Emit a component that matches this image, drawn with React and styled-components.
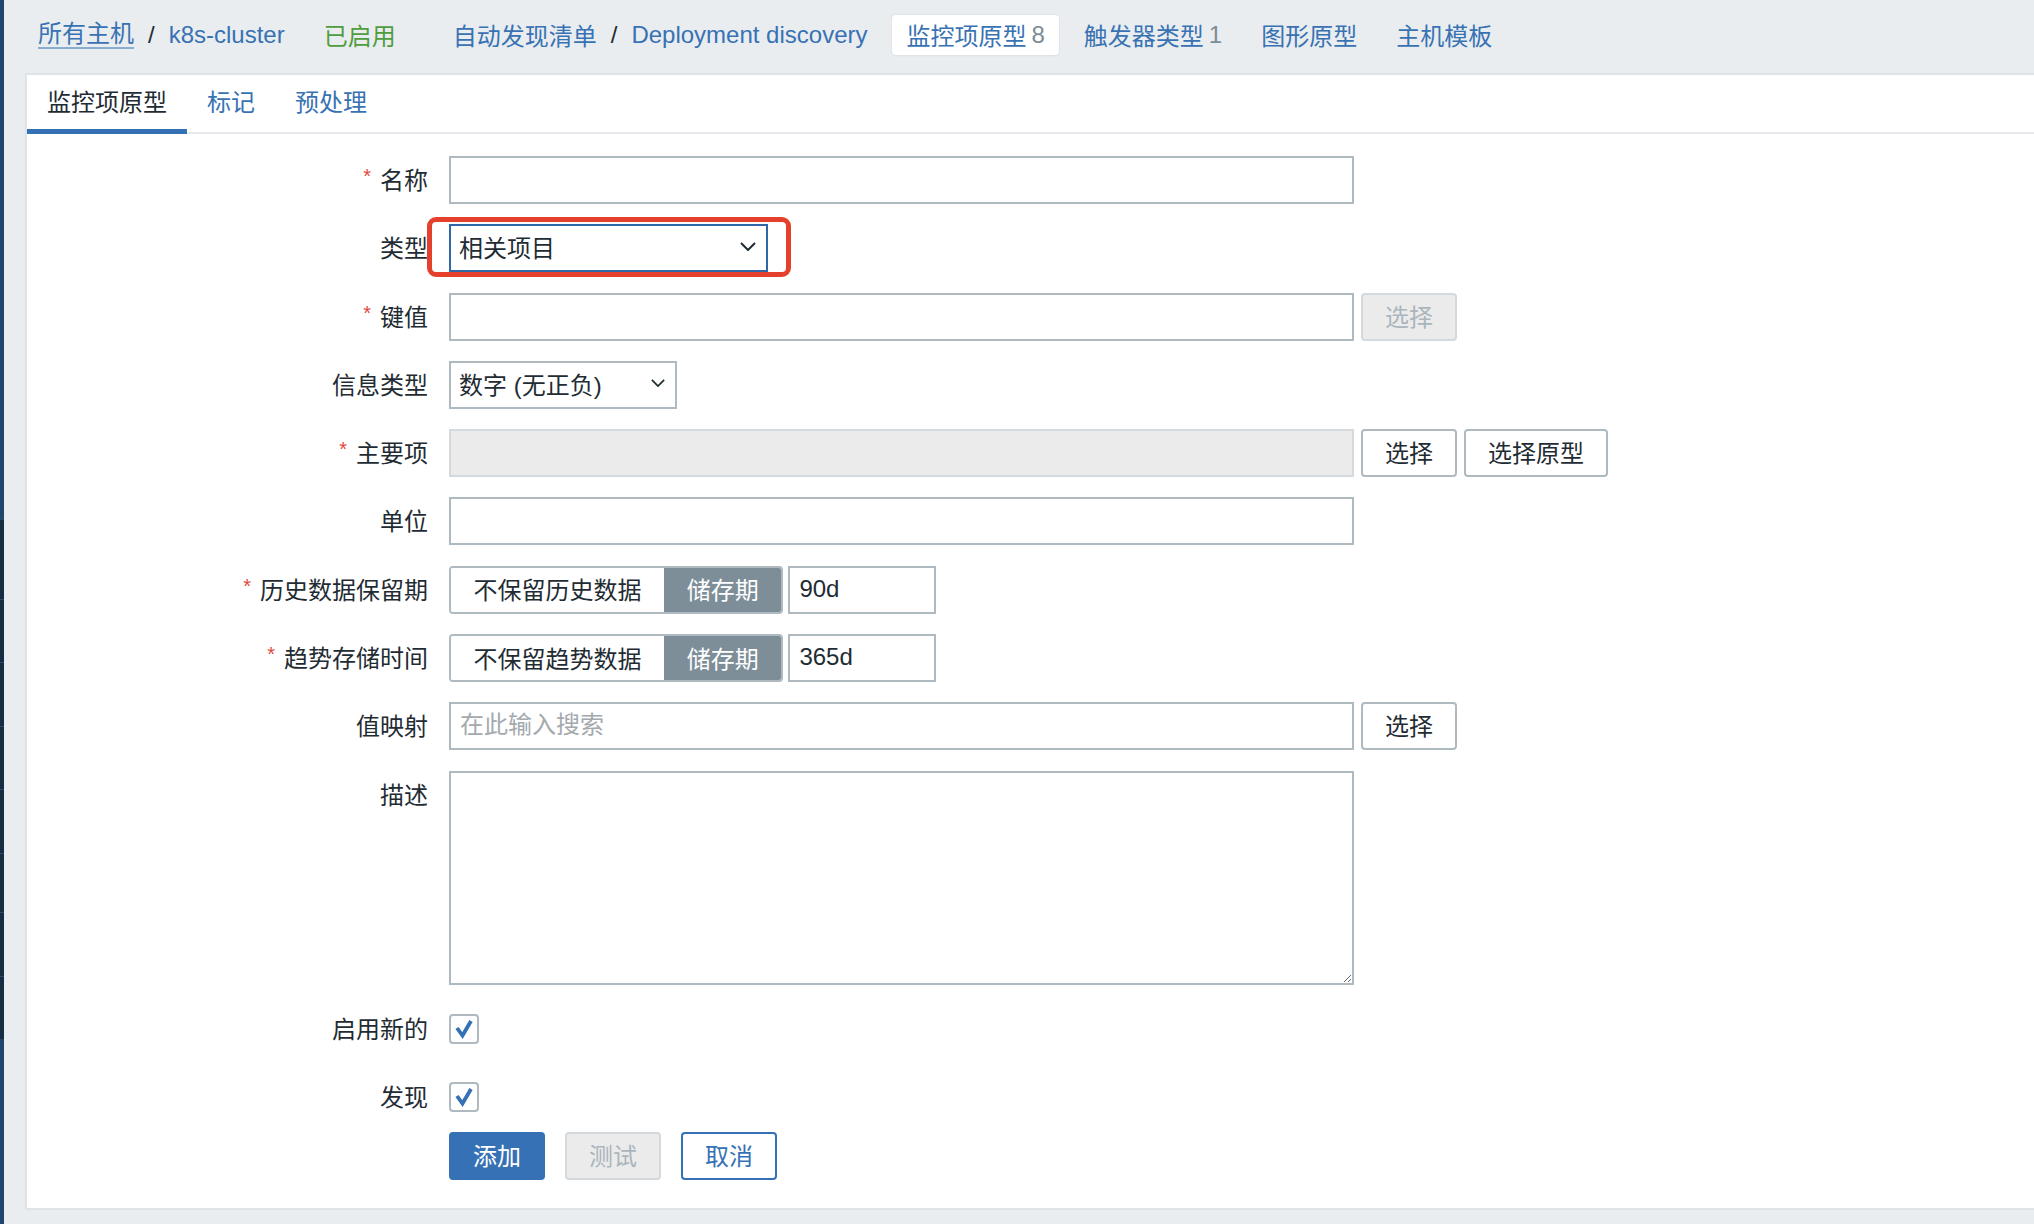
import React from 'react'
import styled, { createGlobalStyle, css } from 'styled-components'

const GlobalStyle = createGlobalStyle`
  html, body {
    margin: 0;
    padding: 0;
    background: #e9edf0;
  }
  body {
    font-family: 'Liberation Sans', 'Noto Sans CJK SC', sans-serif;
    color: #1f2c33;
  }
`

const blue = '#3872b3'
const border = '#aeb9c0'
const font = `'Liberation Sans', 'Noto Sans CJK SC', sans-serif`

const Page = styled.div`
  display: flex;
  height: 1224px;
  overflow: hidden;
`

const SideEdge = styled.div`
  width: 4px;
  display: flex;
  flex-direction: column;
  background: #1f476b;
`

const SideBlock = styled.div`
  height: ${(p) => p.$h}px;
  background: ${(p) => (p.$dark ? '#172d42' : '#1f476b')};
  border-top: ${(p) => (p.$dark ? '1px solid #2c4a64' : 'none')};
`

const Main = styled.div`
  flex: 1;
  display: flex;
  flex-direction: column;
  padding-bottom: 14px;
`

const Header = styled.div`
  height: 69px;
  padding-bottom: 4px;
  display: flex;
  align-items: center;
  padding-left: 20px;
  font-size: 24px;
`

const NavItem = styled.div`
  display: flex;
  align-items: center;
  height: 40px;
  padding: 0 14px;
  margin-right: 11px;
  margin-left: ${(p) => p.$offset || 0}px;
  border-radius: 4px;
  white-space: nowrap;
  color: ${(p) => (p.$green ? '#4f9d3e' : blue)};
  ${(p) =>
    p.$active &&
    css`
      background: #fff;
      box-shadow: 0 0 0 1px #dfe4e8, 0 1px 2px rgba(0, 0, 0, 0.06);
    `}
`

const NavLink = styled.span`
  color: ${blue};
  ${(p) =>
    p.$underline &&
    css`
      border-bottom: 2px solid #8aaed2;
      line-height: 26px;
    `}
`

const Sep = styled.span`
  margin: 0 14px;
  color: #1f2c33;
`

const Count = styled.span`
  color: #7c8b96;
  margin-left: 5px;
`

const Card = styled.div`
  flex: 1;
  margin-left: 21px;
  background: #fff;
  border-top: 2px solid #dde3e7;
  border-left: 2px solid #dde3e7;
  border-bottom: 2px solid #dde3e7;
  display: flex;
  flex-direction: column;
`

const TabBar = styled.div`
  display: flex;
  border-bottom: 2px solid #e6eaee;
`

const Tab = styled.div`
  height: 54px;
  line-height: 56px;
  padding: 0 20px;
  font-size: 24px;
  margin-bottom: -2px;
  border-bottom: 5px solid ${(p) => (p.$active ? '#3470b4' : 'transparent')};
  color: ${(p) => (p.$active ? '#1f2c33' : blue)};
`

const Form = styled.div`
  display: grid;
  grid-template-columns: 401px 1fr;
  column-gap: 21px;
  row-gap: 20.3px;
  padding-top: 22px;
`

const Label = styled.div`
  display: flex;
  justify-content: flex-end;
  align-items: center;
  box-sizing: border-box;
  height: 48px;
  padding-bottom: 3px;
  font-size: 24px;
  white-space: nowrap;
  align-self: start;
`

const Star = styled.span`
  color: #e2483d;
  font-size: 20px;
  margin-right: 9px;
  position: relative;
  top: -2px;
`

const Field = styled.div`
  display: flex;
  align-items: center;
  gap: ${(p) => p.$gap ?? 7}px;
  min-height: 48px;
`

const TextInput = styled.input`
  box-sizing: border-box;
  width: ${(p) => p.$w || 905}px;
  height: 48px;
  border: 2px solid ${border};
  padding: 0 9px 2px;
  font-family: ${font};
  font-size: 24px;
  color: #1f2c33;
  background: #fff;
  outline: none;
  &::placeholder {
    color: #a3a9ad;
  }
  &:disabled {
    background: #ebebeb;
    border-color: #d3d9dd;
  }
`

const SelectBox = styled.div`
  box-sizing: border-box;
  width: ${(p) => p.$w}px;
  height: 48px;
  display: flex;
  align-items: center;
  justify-content: space-between;
  padding: 0 10px 3px 8px;
  border: 2px solid ${(p) => (p.$focus ? '#2f68a6' : border)};
  font-size: 24px;
  background: #fff;
`

const Highlight = styled.div`
  position: relative;
  &::after {
    content: '';
    position: absolute;
    top: -7px;
    left: -22px;
    right: -23px;
    bottom: -5px;
    border: 5px solid #e4402b;
    border-radius: 9px;
    pointer-events: none;
  }
`

const Button = styled.button`
  box-sizing: border-box;
  height: 48px;
  padding: 0 22px 3px;
  font-family: ${font};
  font-size: 24px;
  border-radius: 4px;
  border: 2px solid ${border};
  background: #fff;
  color: #1f2c33;
  ${(p) =>
    p.$variant === 'disabled' &&
    css`
      background: #ebebeb;
      border-color: #d3d9dd;
      color: #aab5bc;
    `}
  ${(p) =>
    p.$variant === 'primary' &&
    css`
      background: #3671b5;
      border-color: #3671b5;
      color: #fff;
    `}
  ${(p) =>
    p.$variant === 'outline' &&
    css`
      border-color: #3671b5;
      color: #3671b5;
    `}
`

const Segmented = styled.div`
  display: flex;
  height: 48px;
  box-sizing: border-box;
  border: 2px solid ${border};
  border-radius: 4px;
  overflow: hidden;
`

const Segment = styled.div`
  display: flex;
  align-items: center;
  padding: 0 22.6px 2px;
  font-size: 24px;
  background: ${(p) => (p.$active ? '#7d8e99' : '#fff')};
  color: ${(p) => (p.$active ? '#fff' : '#1f2c33')};
`

const TextArea = styled.textarea`
  box-sizing: border-box;
  width: 905px;
  height: 214px;
  border: 2px solid ${border};
  font-family: ${font};
  font-size: 24px;
  resize: both;
  outline: none;
`

const CheckBox = styled.div`
  box-sizing: border-box;
  width: 30px;
  height: 30px;
  border: 2px solid ${border};
  border-radius: 4px;
  display: flex;
  align-items: center;
  justify-content: center;
`

const ButtonRow = styled.div`
  display: flex;
  gap: 20px;
  padding-left: 422px;
  margin-top: 11px;
`

const Chevron = ({ w = 16 }) => (
  <svg width={w} height={w / 2 + 1} viewBox="0 0 16 9" fill="none">
    <path d="M1 1 L8 8 L15 1" stroke="#1f2c33" strokeWidth="2" />
  </svg>
)

const Check = () => (
  <CheckBox>
    <svg width="22" height="22" viewBox="0 0 22 22" fill="none">
      <path d="M4 10 L9.5 17.5 L18 3" stroke="#3470b4" strokeWidth="3.8" strokeLinejoin="miter" />
    </svg>
  </CheckBox>
)

const Req = ({ children }) => (
  <Label>
    <Star>*</Star>
    {children}
  </Label>
)

const sideBlocks = [
  { h: 519 },
  { h: 79, dark: true },
  { h: 62, dark: true },
  { h: 63, dark: true },
  { h: 62, dark: true },
  { h: 63, dark: true },
  { h: 58, dark: true },
  { h: 63, dark: true },
  { h: 62, dark: true },
]

export default function App() {
  return (
    <>
      <GlobalStyle />
      <Page>
        <SideEdge>
          {sideBlocks.map((b, i) => (
            <SideBlock key={i} $h={b.h} $dark={b.dark} />
          ))}
        </SideEdge>
        <Main>
          <Header>
            <NavItem>
              <NavLink $underline>所有主机</NavLink>
              <Sep>/</Sep>
              <NavLink>k8s-cluster</NavLink>
            </NavItem>
            <NavItem $green>已启用</NavItem>
            <NavItem $offset={18}>
              <NavLink>自动发现清单</NavLink>
              <Sep>/</Sep>
              <NavLink>Deployment discovery</NavLink>
            </NavItem>
            <NavItem $active>
              监控项原型<Count>8</Count>
            </NavItem>
            <NavItem>
              触发器类型<Count>1</Count>
            </NavItem>
            <NavItem>图形原型</NavItem>
            <NavItem>主机模板</NavItem>
          </Header>

          <Card>
            <TabBar>
              <Tab $active>监控项原型</Tab>
              <Tab>标记</Tab>
              <Tab>预处理</Tab>
            </TabBar>

            <Form>
              <Req>名称</Req>
              <Field>
                <TextInput />
              </Field>

              <Label>类型</Label>
              <Field>
                <Highlight>
                  <SelectBox $w={319} $focus>
                    <span>相关项目</span>
                    <Chevron />
                  </SelectBox>
                </Highlight>
              </Field>

              <Req>键值</Req>
              <Field>
                <TextInput />
                <Button $variant="disabled">选择</Button>
              </Field>

              <Label>信息类型</Label>
              <Field>
                <SelectBox $w={228}>
                  <span>数字 (无正负)</span>
                  <Chevron w={14} />
                </SelectBox>
              </Field>

              <Req>主要项</Req>
              <Field>
                <TextInput disabled />
                <Button>选择</Button>
                <Button>选择原型</Button>
              </Field>

              <Label>单位</Label>
              <Field>
                <TextInput />
              </Field>

              <Req>历史数据保留期</Req>
              <Field $gap={5}>
                <Segmented>
                  <Segment>不保留历史数据</Segment>
                  <Segment $active>储存期</Segment>
                </Segmented>
                <TextInput $w={148} defaultValue="90d" />
              </Field>

              <Req>趋势存储时间</Req>
              <Field $gap={5}>
                <Segmented>
                  <Segment>不保留趋势数据</Segment>
                  <Segment $active>储存期</Segment>
                </Segmented>
                <TextInput $w={148} defaultValue="365d" />
              </Field>

              <Label>值映射</Label>
              <Field>
                <TextInput placeholder="在此输入搜索" />
                <Button>选择</Button>
              </Field>

              <Label>描述</Label>
              <Field>
                <TextArea />
              </Field>

              <Label>启用新的</Label>
              <Field>
                <Check />
              </Field>

              <Label>发现</Label>
              <Field>
                <Check />
              </Field>
            </Form>

            <ButtonRow>
              <Button $variant="primary">添加</Button>
              <Button $variant="disabled">测试</Button>
              <Button $variant="outline">取消</Button>
            </ButtonRow>
          </Card>
        </Main>
      </Page>
    </>
  )
}
